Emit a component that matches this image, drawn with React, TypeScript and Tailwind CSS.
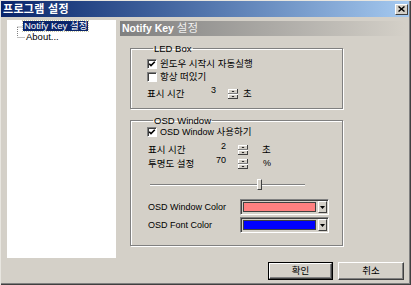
import React from "react";

function Check({ checked }: { checked: boolean }) {
  return (
    <span className="w-[10px] h-[10px] shrink-0 bg-white border border-t-[#808080] border-l-[#808080] border-b-white border-r-white shadow-[inset_1px_1px_0_#404040] flex items-center justify-center">
      {checked && (
        <svg width="8" height="8" viewBox="0 0 8 8">
          <polyline points="1.2,3.8 3,5.6 6.8,1.8" fill="none" stroke="#000" strokeWidth="1.6" />
        </svg>
      )}
    </span>
  );
}

function Spinner() {
  return (
    <svg width="10" height="10" viewBox="0 0 10 10" className="shrink-0">
      <rect x="0" y="0" width="10" height="10" fill="#d4d0c8" />
      <line x1="0.5" y1="0" x2="0.5" y2="10" stroke="#fff" />
      <line x1="0" y1="0.5" x2="10" y2="0.5" stroke="#fff" />
      <line x1="9.5" y1="0" x2="9.5" y2="10" stroke="#404040" />
      <line x1="0" y1="9.5" x2="10" y2="9.5" stroke="#404040" />
      <line x1="0" y1="4.5" x2="10" y2="4.5" stroke="#808080" />
      <line x1="0" y1="5.5" x2="10" y2="5.5" stroke="#fff" />
      <polygon points="3.5,3 6.5,3 5,1.8" fill="#000" />
      <polygon points="3.5,7 6.5,7 5,8.2" fill="#000" />
    </svg>
  );
}

function ColorBox({ color }: { color: string }) {
  return (
    <div className="w-[89px] h-[16px] border border-t-[#808080] border-l-[#808080] border-b-white border-r-white shadow-[inset_1px_1px_0_#404040,inset_-1px_-1px_0_#d4d0c8] bg-[#d4d0c8] flex items-center pl-[2px] pr-[1px] gap-[2px]">
      <div className="w-[73px] h-[10px] border border-[#404040]" style={{ background: color }} />
      <div className="w-[9px] h-[12px] border border-t-white border-l-white border-b-[#404040] border-r-[#404040] bg-[#d4d0c8] flex items-center justify-center">
        <svg width="5" height="3" viewBox="0 0 5 3">
          <polygon points="0,0 5,0 2.5,3" fill="#000" />
        </svg>
      </div>
    </div>
  );
}

export default function App() {
  return (
    <div className="w-[411px] h-[285px] bg-[#d4d0c8] flex flex-col pt-[1px] pl-[1px] pr-[2px] pb-[2px] shadow-[inset_1px_1px_0_#e8e6e0,inset_-1px_-1px_0_#404040,inset_-2px_-2px_0_#808080] font-['Liberation_Sans','Noto_Sans_CJK_KR',sans-serif] text-[9.5px] text-black leading-none overflow-hidden">
      {/* title bar */}
      <div className="h-[16px] shrink-0 bg-gradient-to-r from-[#0a246a] to-[#a6caf0] flex items-center justify-between pl-[2px] pr-[1px]">
        <span className="text-white font-bold text-[11px] tracking-[0.3px]">프로그램 설정</span>
        <div className="w-[13px] h-[11px] bg-[#d4d0c8] border border-t-white border-l-white border-b-[#404040] border-r-[#404040] flex items-center justify-center">
          <svg width="7" height="6" viewBox="0 0 7 6">
            <line x1="0.5" y1="0.5" x2="6.5" y2="5.5" stroke="#000" strokeWidth="1.4" />
            <line x1="6.5" y1="0.5" x2="0.5" y2="5.5" stroke="#000" strokeWidth="1.4" />
          </svg>
        </div>
      </div>

      <div className="flex pt-[3px] pl-[6px]">
        {/* tree */}
        <div className="w-[109px] h-[238px] bg-white flex flex-col pt-[1px] shrink-0">
          <div className="flex items-center h-[10px]">
            <svg width="16" height="10" viewBox="0 0 16 10" className="shrink-0">
              <line x1="10.5" y1="6" x2="16" y2="6" stroke="#808080" strokeDasharray="1 1" />
              <line x1="10.5" y1="6" x2="10.5" y2="10" stroke="#808080" strokeDasharray="1 1" />
            </svg>
            <span className="h-[10px] bg-[#0a246a] text-white px-[1px] flex items-center outline outline-1 outline-dotted outline-[#c8c8a0]">
              Notify Key 설정
            </span>
          </div>
          <div className="flex items-center h-[12px]">
            <svg width="19" height="12" viewBox="0 0 19 12" className="shrink-0">
              <line x1="10.5" y1="0" x2="10.5" y2="6" stroke="#808080" strokeDasharray="1 1" />
              <line x1="10.5" y1="6.5" x2="18" y2="6.5" stroke="#808080" strokeDasharray="1 1" />
            </svg>
            <span>About...</span>
          </div>
        </div>

        {/* right panel */}
        <div className="ml-[4px] w-[285px] flex flex-col">
          <div className="mt-[1px] h-[15px] bg-gradient-to-r from-[#808080] to-[#d4d0c8] flex items-center pl-[2px] text-white font-bold text-[10.5px]">
            Notify Key&nbsp;<span className="font-normal text-[#f0f0f0] text-[11.5px]">설정</span>
          </div>

          <div className="pl-[10px] flex flex-col">
            {/* LED Box */}
            <fieldset className="mt-[7px] w-[213px] border border-[#808080] shadow-[1px_1px_0_#fff,inset_1px_1px_0_#fff] pl-[16px] pb-[8px] flex flex-col">
              <legend className="ml-[6px] px-[1px] leading-[11px]">LED Box</legend>
              <div className="mt-[3px] h-[13px] flex items-center gap-[3px]">
                <Check checked />
                <span className="text-[9.5px]">윈도우 시작시 자동실행</span>
              </div>
              <div className="h-[13px] flex items-center gap-[3px]">
                <Check checked={false} />
                <span className="text-[9.5px]">항상 떠있기</span>
              </div>
              <div className="mt-[4px] h-[13px] flex items-center">
                <span className="w-[57px]">표시 시간</span>
                <span className="w-[12px] text-right pb-[6px] text-[9px]">3</span>
                <span className="ml-[12px]"><Spinner /></span>
                <span className="ml-[5px]">초</span>
              </div>
            </fieldset>

            {/* OSD Window */}
            <fieldset className="mt-[6px] w-[213px] border border-[#808080] shadow-[1px_1px_0_#fff,inset_1px_1px_0_#fff] pl-[16px] pb-[12px] flex flex-col">
              <legend className="ml-[6px] px-[1px] leading-[11px]">OSD Window</legend>
              <div className="h-[12px] flex items-center gap-[3px]">
                <Check checked />
                <span className="text-[9px]">OSD Window <span className="text-[9.5px]">사용하기</span></span>
              </div>
              <div className="mt-[5px] h-[13px] flex items-center pl-[1px]">
                <span className="w-[62px]">표시 시간</span>
                <span className="w-[16px] text-right pb-[6px] text-[9px]">2</span>
                <span className="ml-[12px]"><Spinner /></span>
                <span className="ml-[14px]">초</span>
              </div>
              <div className="mt-[1px] h-[13px] flex items-center pl-[1px]">
                <span className="w-[62px]">투명도 설정</span>
                <span className="w-[16px] text-right pb-[6px] text-[9px]">70</span>
                <span className="ml-[12px]"><Spinner /></span>
                <span className="ml-[15px] text-[9px]">%</span>
              </div>
              <div className="mt-[9px] ml-[3px] w-[155px] h-[12px] relative flex items-center">
                <div className="w-full h-[2px] border-t border-[#808080] border-b border-b-white" />
                <div className="absolute left-[107px] top-0 w-[5px] h-[11px] bg-[#d4d0c8] border border-t-white border-l-white border-b-[#404040] border-r-[#404040]" />
              </div>
              <div className="mt-[8px] h-[16px] flex items-center pl-[1px]">
                <span className="w-[92px] text-[9px]">OSD Window Color</span>
                <ColorBox color="#ff8080" />
              </div>
              <div className="mt-[2px] h-[16px] flex items-center pl-[1px]">
                <span className="w-[92px] text-[9px]">OSD Font Color</span>
                <ColorBox color="#0000ff" />
              </div>
            </fieldset>
          </div>
        </div>
      </div>

      {/* buttons */}
      <div className="mt-[4px] flex justify-end gap-[5px] pr-[5px]">
        <div className="w-[65px] h-[18px] border border-black flex">
          <div className="flex-1 border border-t-white border-l-white border-b-[#404040] border-r-[#404040] shadow-[inset_-1px_-1px_0_#808080] flex items-center justify-center text-[9.5px]">
            확인
          </div>
        </div>
        <div className="w-[66px] h-[18px] border border-t-white border-l-white border-b-[#404040] border-r-[#404040] shadow-[inset_-1px_-1px_0_#808080] flex items-center justify-center text-[9.5px]">
          취소
        </div>
      </div>
    </div>
  );
}
